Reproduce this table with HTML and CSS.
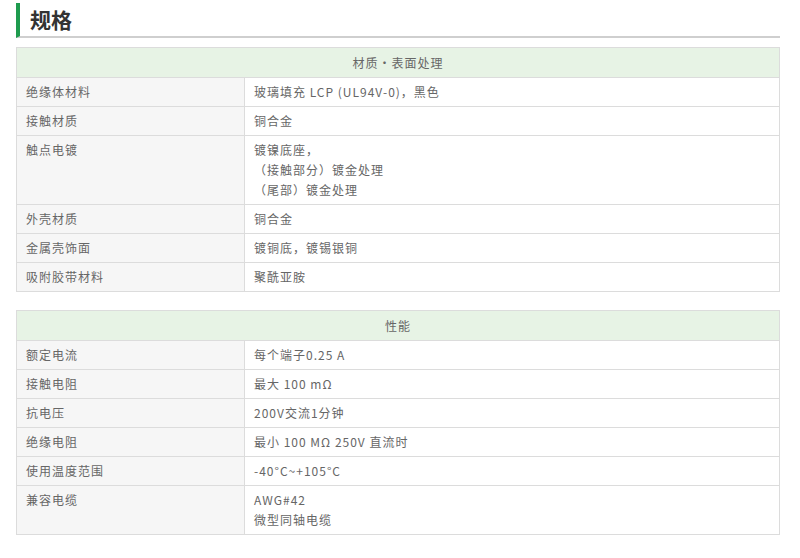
FILE: index.html
```html
<!DOCTYPE html>
<html lang="zh-CN">
<head>
<meta charset="utf-8">
<link rel="stylesheet" href="styles.css">
</head>
<body>
<div class="page">
  <h2 class="title">规格</h2>
  <table class="spec">
    <colgroup><col class="c1"><col class="c2"></colgroup>
    <thead><tr><th colspan="2">材质・表面处理</th></tr></thead>
    <tbody>
      <tr><td>绝缘体材料</td><td>玻璃填充 LCP (UL94V-0)，黑色</td></tr>
      <tr><td>接触材质</td><td>铜合金</td></tr>
      <tr><td>触点电镀</td><td>镀镍底座，<br>（接触部分）镀金处理<br>（尾部）镀金处理</td></tr>
      <tr><td>外壳材质</td><td>铜合金</td></tr>
      <tr><td>金属壳饰面</td><td>镀铜底，镀锡银铜</td></tr>
      <tr><td>吸附胶带材料</td><td>聚酰亚胺</td></tr>
    </tbody>
  </table>
  <table class="spec">
    <colgroup><col class="c1"><col class="c2"></colgroup>
    <thead><tr><th colspan="2">性能</th></tr></thead>
    <tbody>
      <tr><td>额定电流</td><td>每个端子0.25 A</td></tr>
      <tr><td>接触电阻</td><td>最大 100 mΩ</td></tr>
      <tr><td>抗电压</td><td>200V交流1分钟</td></tr>
      <tr><td>绝缘电阻</td><td>最小 100 MΩ 250V 直流时</td></tr>
      <tr><td>使用温度范围</td><td>-40°C~+105°C</td></tr>
      <tr><td>兼容电缆</td><td>AWG#42<br>微型同轴电缆</td></tr>
    </tbody>
  </table>
</div>
</body>
</html>
```
FILE: styles.css
```css
html, body { margin: 0; padding: 0; background: #fff; }
body {
  font-family: "Noto Sans CJK SC", "Noto Sans", sans-serif;
  color: #666;
}
.page {
  width: 764px;
  padding: 3px 0 0 16px;
}
.title {
  margin: 0;
  font-size: 21px;
  font-weight: 700;
  color: #333;
  line-height: 33px;
  height: 33px;
  padding-left: 10px;
  border-left: 4px solid #1e9b4e;
  border-bottom: 2px solid #cfcfcf;
  box-sizing: content-box;
}
.spec {
  width: 764px;
  border-collapse: collapse;
  font-size: 12px;
  letter-spacing: 1px;
  margin-top: 9px;
  margin-bottom: 9px;
  table-layout: fixed;
}
.spec + .spec { margin-top: 18px; }
.c1 { width: 228px; }
.spec th, .spec td {
  border: 1px solid #dcdcdc;
  text-align: left;
  vertical-align: top;
  line-height: 20px;
  padding: 4px 10px 4px 9px;
  font-weight: 400;
}
.spec th {
  background: #e7f3e5;
  text-align: center;
  padding: 5px 10px 4px;
}
.spec td:first-child { background: #f6f6f6; }
.spec td:last-child { background: #fff; }
```
